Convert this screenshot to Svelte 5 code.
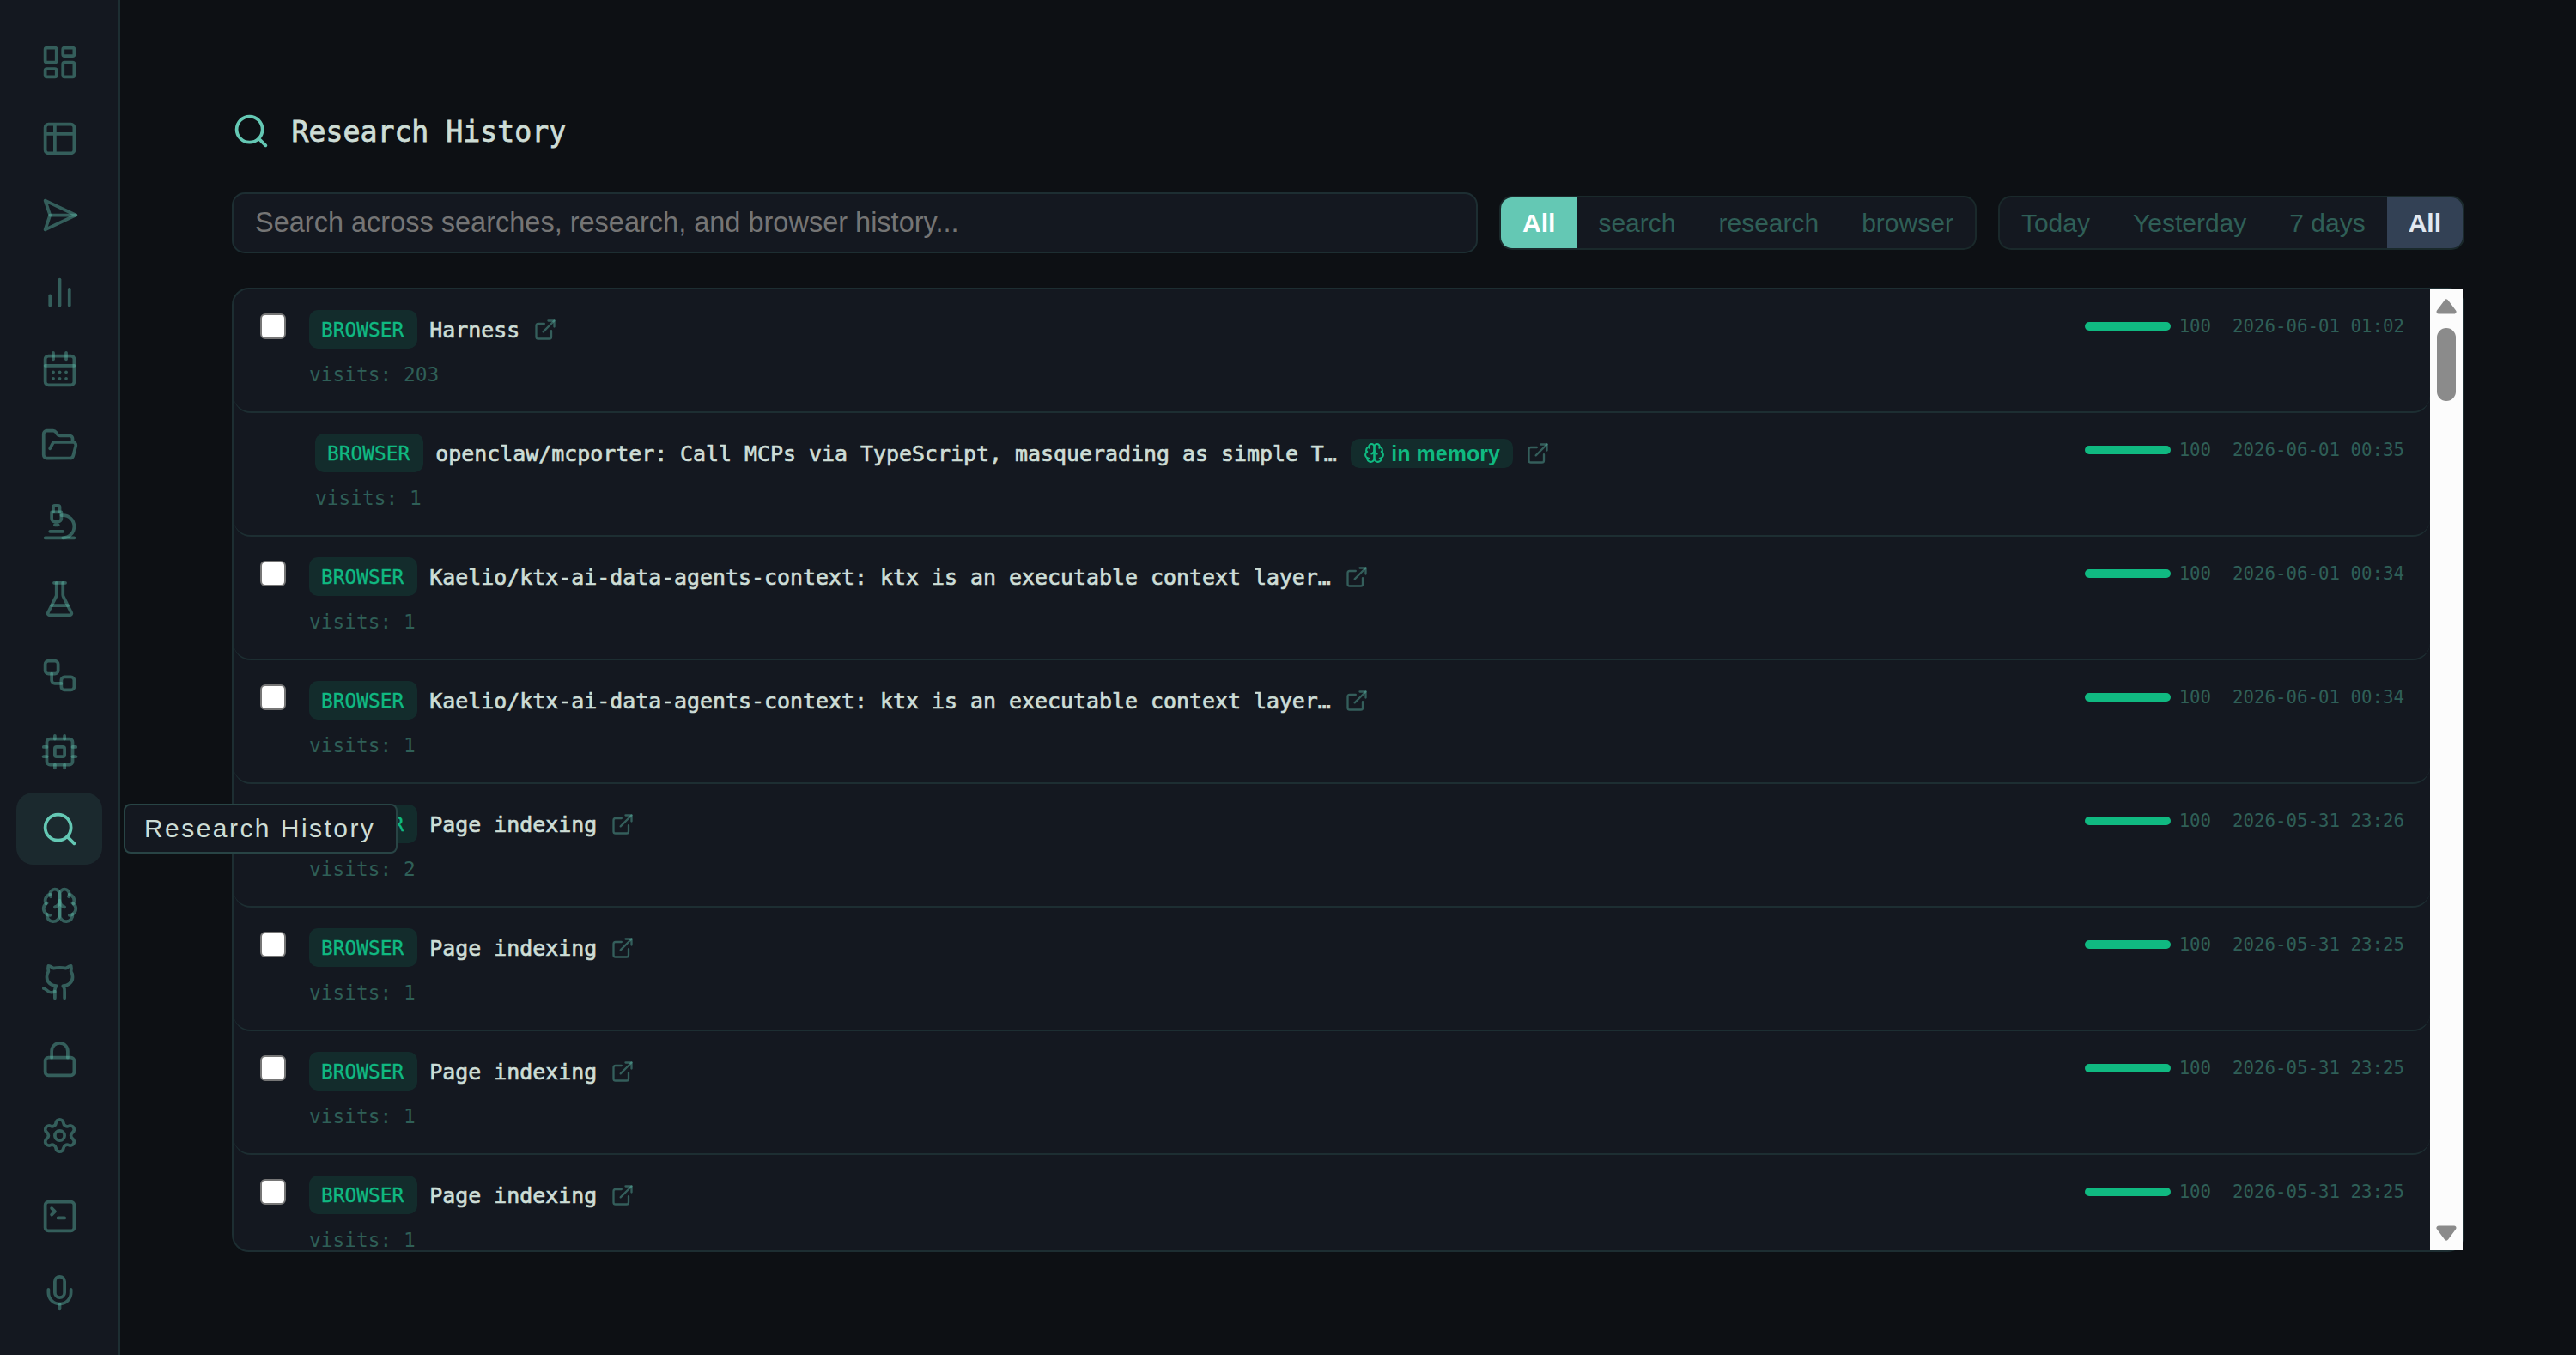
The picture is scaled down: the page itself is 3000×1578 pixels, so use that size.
<script>
  const rect = (x, y, w, h, r) =>
    `M${x + r} ${y}h${w - 2 * r}a${r} ${r} 0 0 1 ${r} ${r}v${h - 2 * r}a${r} ${r} 0 0 1 ${-r} ${r}h${-(w - 2 * r)}a${r} ${r} 0 0 1 ${-r} ${-r}v${-(h - 2 * r)}a${r} ${r} 0 0 1 ${r} ${-r}z`;
  const circle = (x, y, r) => `M${x - r} ${y}a${r} ${r} 0 1 0 ${2 * r} 0a${r} ${r} 0 1 0 ${-2 * r} 0z`;

  const icons = {
    dashboard: [rect(3, 3, 7, 9, 1), rect(14, 3, 7, 5, 1), rect(14, 12, 7, 9, 1), rect(3, 16, 7, 5, 1)],
    table: [rect(3, 3, 18, 18, 2) + 'M3 9h18M9 3v18'],
    send: ['m3 3 3 9-3 9 19-9Z', 'M6 12h16'],
    chart: ['M18 20V10', 'M12 20V4', 'M6 20v-6'],
    calendar: [
      'M8 2v4', 'M16 2v4', rect(3, 4, 18, 18, 2), 'M3 10h18',
      'M8 14h.01', 'M12 14h.01', 'M16 14h.01', 'M8 18h.01', 'M12 18h.01', 'M16 18h.01'
    ],
    folder: [
      'm6 14 1.5-2.9A2 2 0 0 1 9.24 10H20a2 2 0 0 1 1.94 2.5l-1.54 6a2 2 0 0 1-1.95 1.5H4a2 2 0 0 1-2-2V5a2 2 0 0 1 2-2h3.9a2 2 0 0 1 1.69.9l.81 1.2a2 2 0 0 0 1.67.9H18a2 2 0 0 1 2 2v2'
    ],
    microscope: [
      'M6 18h8', 'M3 22h18', 'M14 22a7 7 0 1 0 0-14h-1', 'M9 14h2',
      'M9 12a2 2 0 0 1-2-2V6h6v4a2 2 0 0 1-2 2Z', 'M12 6V3a1 1 0 0 0-1-1H9a1 1 0 0 0-1 1v3'
    ],
    flask: [
      'M10 2v7.527a2 2 0 0 1-.211.896L4.72 20.55a1 1 0 0 0 .9 1.45h12.76a1 1 0 0 0 .9-1.45l-5.069-10.127A2 2 0 0 1 14 9.527V2',
      'M8.5 2h7', 'M7 16h10'
    ],
    workflow: [rect(3, 3, 8, 8, 2), 'M7 11v4a2 2 0 0 0 2 2h4', rect(13, 13, 8, 8, 2)],
    cpu: [
      rect(4, 4, 16, 16, 2), rect(9, 9, 6, 6, 1), 'M15 2v2', 'M15 20v2', 'M2 15h2', 'M2 9h2',
      'M20 15h2', 'M20 9h2', 'M9 2v2', 'M9 20v2'
    ],
    search: [circle(11, 11, 8) + 'M21 21l-4.3-4.3'],
    brain: [
      'M12 5a3 3 0 1 0-5.997.125 4 4 0 0 0-2.526 5.77 4 4 0 0 0 .556 6.588A4 4 0 1 0 12 18Z',
      'M12 5a3 3 0 1 1 5.997.125 4 4 0 0 1 2.526 5.77 4 4 0 0 1-.556 6.588A4 4 0 1 1 12 18Z',
      'M15 13a4.5 4.5 0 0 1-3-4 4.5 4.5 0 0 1-3 4',
      'M17.599 6.5a3 3 0 0 0 .399-1.375', 'M6.003 5.125A3 3 0 0 0 6.401 6.5',
      'M3.477 10.896a4 4 0 0 1 .585-.396', 'M19.938 10.5a4 4 0 0 1 .585.396',
      'M6 18a4 4 0 0 1-1.967-.516', 'M19.967 17.484A4 4 0 0 1 18 18'
    ],
    github: [
      'M15 22v-4a4.8 4.8 0 0 0-1-3.5c3 0 6-2 6-5.5.08-1.25-.27-2.48-1-3.5.28-1.15.28-2.35 0-3.5 0 0-1 0-3 1.5-2.64-.5-5.36-.5-8 0C6 2 5 2 5 2c-.3 1.15-.3 2.35 0 3.5A5.403 5.403 0 0 0 4 9c0 3.5 3 5.5 6 5.5-.39.49-.68 1.05-.85 1.65-.17.6-.22 1.23-.15 1.85v4',
      'M9 18c-4.51 2-5-2-7-2'
    ],
    lock: [rect(3, 11, 18, 11, 2), 'M7 11V7a5 5 0 0 1 10 0v4'],
    settings: [
      'M9.671 4.136a2.34 2.34 0 0 1 4.659 0 2.34 2.34 0 0 0 3.319 1.915 2.34 2.34 0 0 1 2.33 4.033 2.34 2.34 0 0 0 0 3.831 2.34 2.34 0 0 1-2.33 4.033 2.34 2.34 0 0 0-3.319 1.915 2.34 2.34 0 0 1-4.659 0 2.34 2.34 0 0 0-3.32-1.915 2.34 2.34 0 0 1-2.33-4.033 2.34 2.34 0 0 0 0-3.831A2.34 2.34 0 0 1 6.35 6.051a2.34 2.34 0 0 0 3.319-1.915',
      circle(12, 12, 3)
    ],
    terminal: [rect(3, 3, 18, 18, 2), 'm7 11 2-2-2-2', 'M11 13h4'],
    mic: ['M12 2a3 3 0 0 0-3 3v7a3 3 0 0 0 6 0V5a3 3 0 0 0-3-3Z', 'M19 10v2a7 7 0 0 1-14 0v-2', 'M12 19v3'],
    external: ['M15 3h6v6', 'M10 14 21 3', 'M18 13v6a2 2 0 0 1-2 2H5a2 2 0 0 1-2-2V8a2 2 0 0 1 2-2h6']
  };

  const nav = [
    'dashboard', 'table', 'send', 'chart', 'calendar', 'folder', 'microscope', 'flask',
    'workflow', 'cpu', 'search', 'brain', 'github', 'lock', 'settings'
  ];
  const tools = ['terminal', 'mic'];

  const kinds = ['All', 'search', 'research', 'browser'];
  const ranges = ['Today', 'Yesterday', '7 days', 'All'];
  let kind = $state('All');
  let range = $state('All');

  const ktx = 'Kaelio/ktx-ai-data-agents-context: ktx is an executable context layer…';
  const rows = [
    { title: 'Harness', visits: 203, at: '2026-06-01 01:02' },
    {
      title: 'openclaw/mcporter: Call MCPs via TypeScript, masquerading as simple T…',
      visits: 1, at: '2026-06-01 00:35', memory: true
    },
    { title: ktx, visits: 1, at: '2026-06-01 00:34' },
    { title: ktx, visits: 1, at: '2026-06-01 00:34' },
    { title: 'Page indexing', visits: 2, at: '2026-05-31 23:26' },
    { title: 'Page indexing', visits: 1, at: '2026-05-31 23:25' },
    { title: 'Page indexing', visits: 1, at: '2026-05-31 23:25' },
    { title: 'Page indexing', visits: 1, at: '2026-05-31 23:25' }
  ];
</script>

{#snippet icon(name)}
  <svg class="icon" viewBox="0 0 24 24" aria-hidden="true">
    {#each icons[name] as d}<path {d} />{/each}
  </svg>
{/snippet}

<div class="app">
  <nav class="sidebar">
    {#each nav as name}
      <div class="nav-item" class:active={name === 'search'}>
        {@render icon(name)}
        {#if name === 'search'}<span class="tooltip">Research History</span>{/if}
      </div>
    {/each}
    <div class="tools">
      {#each tools as name}
        <div class="nav-item">{@render icon(name)}</div>
      {/each}
    </div>
  </nav>

  <main>
    <header>
      {@render icon('search')}
      <h1>Research History</h1>
    </header>

    <div class="filters">
      <input class="query" type="text" placeholder="Search across searches, research, and browser history..." />
      <div class="segment kinds">
        {#each kinds as k}
          <button class:on={kind === k} onclick={() => (kind = k)}>{k}</button>
        {/each}
      </div>
      <div class="segment ranges">
        {#each ranges as r}
          <button class:on={range === r} onclick={() => (range = r)}>{r}</button>
        {/each}
      </div>
    </div>

    <section class="list">
      <div class="rows">
        {#each rows as row}
          <article class="row" class:saved={row.memory}>
            {#if !row.memory}<input class="check" type="checkbox" aria-label={row.title} />{/if}
            <div class="body">
              <div class="headline">
                <span class="badge">BROWSER</span>
                <span class="title">{row.title}</span>
                {#if row.memory}
                  <span class="memory">{@render icon('brain')}in memory</span>
                {/if}
                <span class="link">{@render icon('external')}</span>
              </div>
              <div class="visits">visits: {row.visits}</div>
            </div>
            <div class="meta">
              <span class="bar"></span>
              <span class="score">100</span>
              <span class="date">{row.at}</span>
            </div>
          </article>
        {/each}
      </div>
      <div class="scrollbar">
        <svg class="arrow" viewBox="0 0 24 18"><path d="M12 3 21 15H3Z" /></svg>
        <div class="thumb"></div>
        <svg class="arrow down" viewBox="0 0 24 18"><path d="M12 15 3 3H21Z" /></svg>
      </div>
    </section>
  </main>
</div>

<style>
  :global(body) {
    background: #0d1014;
  }
  .app {
    --accent: #64c8b4;
    --muted: rgba(100, 200, 180, 0.4);
    --muted-text: #2f5f57;
    --line: #1d2e32;
    --panel: #141820;
    --text: #cdddd6;
    --green: #10b981;
    --mono: 'DejaVu Sans Mono', monospace;
    display: flex;
    width: 3000px;
    height: 1578px;
    overflow: hidden;
    background: #0d1014;
    color: var(--text);
    font-family: 'Liberation Sans', sans-serif;
  }
  .icon {
    display: block;
    flex: none;
    width: 45px;
    height: 45px;
    fill: none;
    stroke: currentColor;
    stroke-width: 2;
    stroke-linecap: round;
    stroke-linejoin: round;
  }

  .sidebar {
    box-sizing: border-box;
    flex: none;
    display: flex;
    flex-direction: column;
    align-items: center;
    gap: 5px;
    width: 140px;
    padding-top: 30px;
    border-right: 2px solid var(--line);
    background: var(--panel);
  }
  .nav-item {
    position: relative;
    display: flex;
    align-items: center;
    justify-content: center;
    width: 100px;
    height: 84.3px;
    border-radius: 20px;
    color: var(--muted);
  }
  .nav-item.active {
    background: rgba(100, 200, 180, 0.1);
    color: var(--accent);
  }
  .tools {
    display: flex;
    flex-direction: column;
    gap: 5px;
    padding-top: 5px;
  }
  .tooltip {
    position: absolute;
    z-index: 2;
    left: 125px;
    top: 13px;
    box-sizing: border-box;
    width: 319px;
    height: 58px;
    padding-left: 22px;
    border: 2px solid rgba(100, 200, 180, 0.25);
    border-radius: 8px;
    background: var(--panel);
    color: var(--text);
    font-size: 30px;
    line-height: 54px;
    letter-spacing: 2.45px;
    white-space: nowrap;
  }

  main {
    flex: 1;
    padding: 130px 130px 0;
  }
  header {
    display: flex;
    align-items: center;
    gap: 24.5px;
    height: 45px;
    color: var(--accent);
  }
  h1 {
    margin: 0;
    padding-top: 2px;
    color: var(--text);
    font: 400 33.2px/45px var(--mono);
    -webkit-text-stroke: 0.8px currentColor;
  }

  .filters {
    display: flex;
    align-items: center;
    gap: 25px;
    margin-top: 49px;
    height: 71px;
  }
  .query {
    box-sizing: border-box;
    flex: 1;
    min-width: 0;
    height: 71px;
    padding: 0 25px;
    border: 2px solid var(--line);
    border-radius: 15px;
    outline: none;
    background: var(--panel);
    color: var(--text);
    font: 32.5px 'Liberation Sans', sans-serif;
  }
  .query::placeholder {
    color: #757575;
  }
  .segment {
    box-sizing: border-box;
    display: flex;
    height: 63px;
    overflow: hidden;
    border: 2px solid #1a292b;
    border-radius: 15px;
    background: var(--panel);
  }
  .segment button {
    padding: 0 25px;
    border: 0;
    background: none;
    color: var(--muted-text);
    font: 30px 'Liberation Sans', sans-serif;
  }
  .segment .on {
    font-weight: 700;
  }
  .kinds .on {
    background: var(--accent);
    color: #fff;
  }
  .ranges .on {
    background: #334155;
    color: #e2e8f0;
  }

  .list {
    box-sizing: border-box;
    display: flex;
    height: 1123px;
    margin-top: 40px;
    border: 2px solid var(--line);
    border-radius: 20px;
    background: var(--panel);
  }
  .rows {
    flex: 1;
    overflow: hidden;
    border-radius: 18px 0 0 18px;
  }
  .row {
    box-sizing: border-box;
    display: flex;
    align-items: flex-start;
    height: 144px;
    padding: 24px 30px 0 31px;
    border-bottom: 2px solid var(--line);
    border-radius: 20px;
  }
  .row.saved {
    padding-left: 95px;
  }
  .check {
    appearance: none;
    box-sizing: border-box;
    flex: none;
    width: 30px;
    height: 30px;
    margin: 4px 27px 0 0;
    border: 2.5px solid #767676;
    border-radius: 6px;
    background: #fff;
  }
  .body {
    flex: 1;
  }
  .headline {
    display: flex;
    align-items: center;
    gap: 15px;
    height: 45px;
  }
  .badge {
    padding: 1px 16px 0 14px;
    border-radius: 10px;
    background: rgba(16, 185, 129, 0.13);
    color: var(--green);
    font: 22.84px/44px var(--mono);
    -webkit-text-stroke: 0.3px currentColor;
  }
  .title {
    margin: 0 1px 0 -1px;
    padding-top: 3px;
    font: 24.91px/42px var(--mono);
    -webkit-text-stroke: 0.7px currentColor;
    white-space: nowrap;
  }
  .memory {
    display: flex;
    align-items: center;
    gap: 7.5px;
    padding: 0 15px;
    border-radius: 10px;
    background: rgba(16, 185, 129, 0.13);
    color: var(--green);
    font-size: 25px;
    font-weight: 700;
    line-height: 34px;
  }
  .memory :global(svg) {
    width: 25px;
    height: 25px;
  }
  .link {
    color: var(--muted);
  }
  .link :global(svg) {
    width: 28px;
    height: 28px;
  }
  .visits {
    margin-top: 13.5px;
    color: var(--muted-text);
    font: 22.84px/32px var(--mono);
  }
  .meta {
    display: flex;
    align-items: center;
    height: 38px;
    color: var(--muted-text);
    font: 20.76px/37px var(--mono);
  }
  .bar {
    width: 100px;
    height: 10px;
    margin-right: 10px;
    border-radius: 5px;
    background: var(--green);
  }
  .score,
  .date {
    padding-top: 1px;
  }
  .score {
    margin-right: 25px;
  }

  .scrollbar {
    box-sizing: border-box;
    display: flex;
    flex-direction: column;
    align-items: center;
    width: 38px;
    padding: 10.5px 0 11px;
    background: #fcfcfc;
  }
  .arrow {
    display: block;
    width: 24px;
    height: 18px;
    fill: #8b8b8b;
    stroke: #8b8b8b;
    stroke-width: 5;
    stroke-linejoin: round;
  }
  .arrow.down {
    margin-top: auto;
  }
  .thumb {
    width: 22px;
    height: 85px;
    margin-top: 16.5px;
    border-radius: 11px;
    background: #8b8b8b;
  }
</style>
